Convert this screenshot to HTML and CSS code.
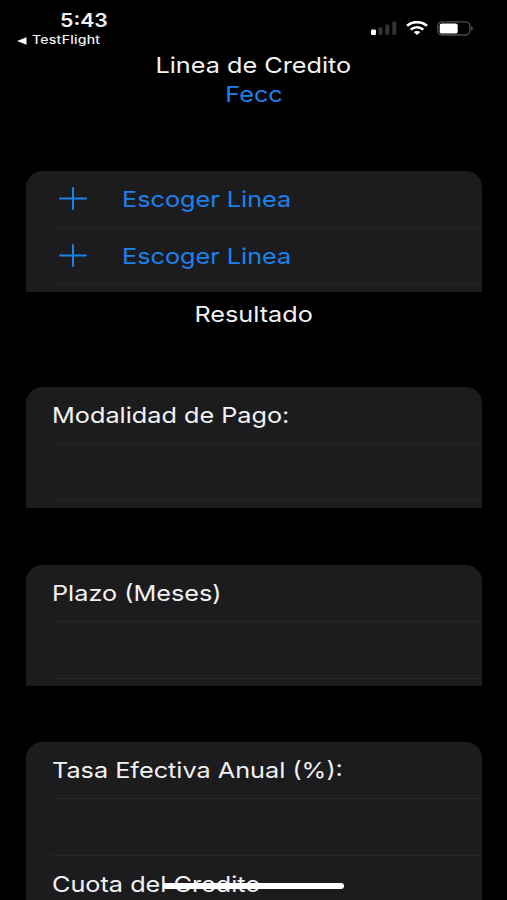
FILE: index.html
```html
<!DOCTYPE html>
<html lang="es">
<head>
  <meta charset="UTF-8" />
  <meta name="viewport" content="width=device-width, initial-scale=1.0"/>
  <title>Linea de Credito</title>
  <link rel="stylesheet" href="styles.css">
</head>
<body>

<header class="status">
  <div class="status-left">
    <div class="time">5:43</div>
    <div class="back">
      <svg width="10" height="8" viewBox="0 0 10 8"><path d="M0 4L9.5 .3V7.7Z" fill="#fff"/></svg>
      <span>TestFlight</span>
    </div>
  </div>
  <div class="status-right">
    <svg width="26" height="14" viewBox="0 0 26 14">
      <rect x="0" y="8.5" width="5" height="5.5" rx="1.3" fill="#fff"/>
      <rect x="7.5" y="6.2" width="4" height="7.8" rx="1.3" fill="#333"/>
      <rect x="14.3" y="3.5" width="4" height="10.5" rx="1.3" fill="#333"/>
      <rect x="21.3" y="0.5" width="4" height="13.5" rx="1.3" fill="#333"/>
    </svg>
    <svg width="22" height="14" viewBox="0 0 22 14" fill="none" stroke="#fff" stroke-width="2.6">
      <path d="M1 4.8C6.5-.1 15.5-.1 21 4.8"/>
      <path d="M4.7 8.6C8.3 5.4 13.7 5.4 17.3 8.6"/>
      <path d="M11 13.9L7.6 11.1C9.6 9.6 12.4 9.6 14.4 11.1Z" fill="#fff" stroke="none"/>
    </svg>
    <svg width="37" height="15" viewBox="0 0 37 15">
      <rect x=".8" y=".8" width="32" height="13.2" rx="4.2" fill="none" stroke="#4d4d4d" stroke-width="1.3"/>
      <rect x="2.7" y="2.4" width="18" height="10.2" rx="2.2" fill="#fff"/>
      <path d="M34.2 5.3C36.4 6 36.4 9 34.2 9.7Z" fill="#5a5a5a"/>
    </svg>
  </div>
</header>

<main>
  <h1 class="title"><span class="wide">Linea de Credito</span></h1>
  <div class="link"><span class="wide">Fecc</span></div>

  <section class="card lines">
    <div class="row action">
      <svg class="plus" width="28" height="23" viewBox="0 0 28 23"><path d="M1 11.5H27M14 1V22"/></svg>
      <span class="wide">Escoger Linea</span>
    </div>
    <div class="row action">
      <svg class="plus" width="28" height="23" viewBox="0 0 28 23"><path d="M1 11.5H27M14 1V22"/></svg>
      <span class="wide">Escoger Linea</span>
    </div>
  </section>

  <h2 class="result"><span class="wide">Resultado</span></h2>

  <section class="card">
    <div class="row"><span class="wide">Modalidad de Pago:</span></div>
    <div class="row"></div>
  </section>

  <section class="card">
    <div class="row"><span class="wide">Plazo (Meses)</span></div>
    <div class="row"></div>
  </section>

  <section class="card">
    <div class="row"><span class="wide">Tasa Efectiva Anual (%):</span></div>
    <div class="row"></div>
    <div class="row"><span class="wide">Cuota del Credito</span></div>
  </section>
</main>

<div class="home-bar"></div>

</body>
</html>
```

FILE: styles.css
```css
:root {
  --bg: #000;
  --card: #1c1c1e;
  --line: #272729;
  --text: #f2f2f2;
  --blue: #1b82ec;
}

* {
  margin: 0;
  padding: 0;
  box-sizing: border-box;
}

html, body {
  height: 100%;
  overflow: hidden;
}

body {
  font-family: Inter, 'Liberation Sans', sans-serif;
  font-size: 22px;
  background: var(--bg);
  color: var(--text);
}

.status {
  display: flex;
  justify-content: space-between;
  height: 51px;
  padding: 9px 33px 0 17px;
}

.time {
  font-size: 18.5px;
  font-weight: 600;
  line-height: 22px;
  padding-left: 43px;
  transform: scaleX(1.15);
  transform-origin: 43px 0;
}

.back {
  display: flex;
  align-items: center;
  gap: 5px;
  font-size: 11.5px;
  font-weight: 500;
  line-height: 19px;
}

.back span {
  letter-spacing: 0.2px;
  transform: scaleX(1.22);
  transform-origin: left;
}

.status-right {
  display: flex;
  align-items: center;
  gap: 9px;
  height: 38px;
}

.title, .link, .result {
  display: flex;
  justify-content: center;
  font-size: 22px;
  font-weight: 400;
  line-height: 29px;
}

.link {
  padding-left: 2px;
}

.link, .action {
  color: var(--blue);
}

/* wide system lettering */
.wide {
  display: inline-block;
  white-space: nowrap;
  transform: scaleX(1.147);
}

.card {
  height: 121.5px;
  margin: 0 25px 56.2px 26px;
  overflow: hidden;
  background: var(--card);
  border-radius: 16px 16px 0 0;
}

.card:last-child {
  height: 157.6px;
  margin-bottom: 0;
}

.card .wide {
  transform-origin: left;
}

.lines {
  margin-top: 61.7px;
  margin-bottom: 8px;
}

.row {
  display: flex;
  align-items: center;
  height: 57px;
  margin-left: 26px;
  border-bottom: 1px solid var(--line);
}

.action {
  gap: 34.5px;
  padding-left: 7px;
}

.plus {
  fill: none;
  stroke: var(--blue);
  stroke-width: 2;
  stroke-linecap: round;
}

.result {
  margin-bottom: 57.8px;
}

.home-bar {
  position: fixed;
  bottom: 11px;
  left: 163px;
  width: 181px;
  height: 6px;
  border-radius: 3px;
  background: #fff;
}
```
